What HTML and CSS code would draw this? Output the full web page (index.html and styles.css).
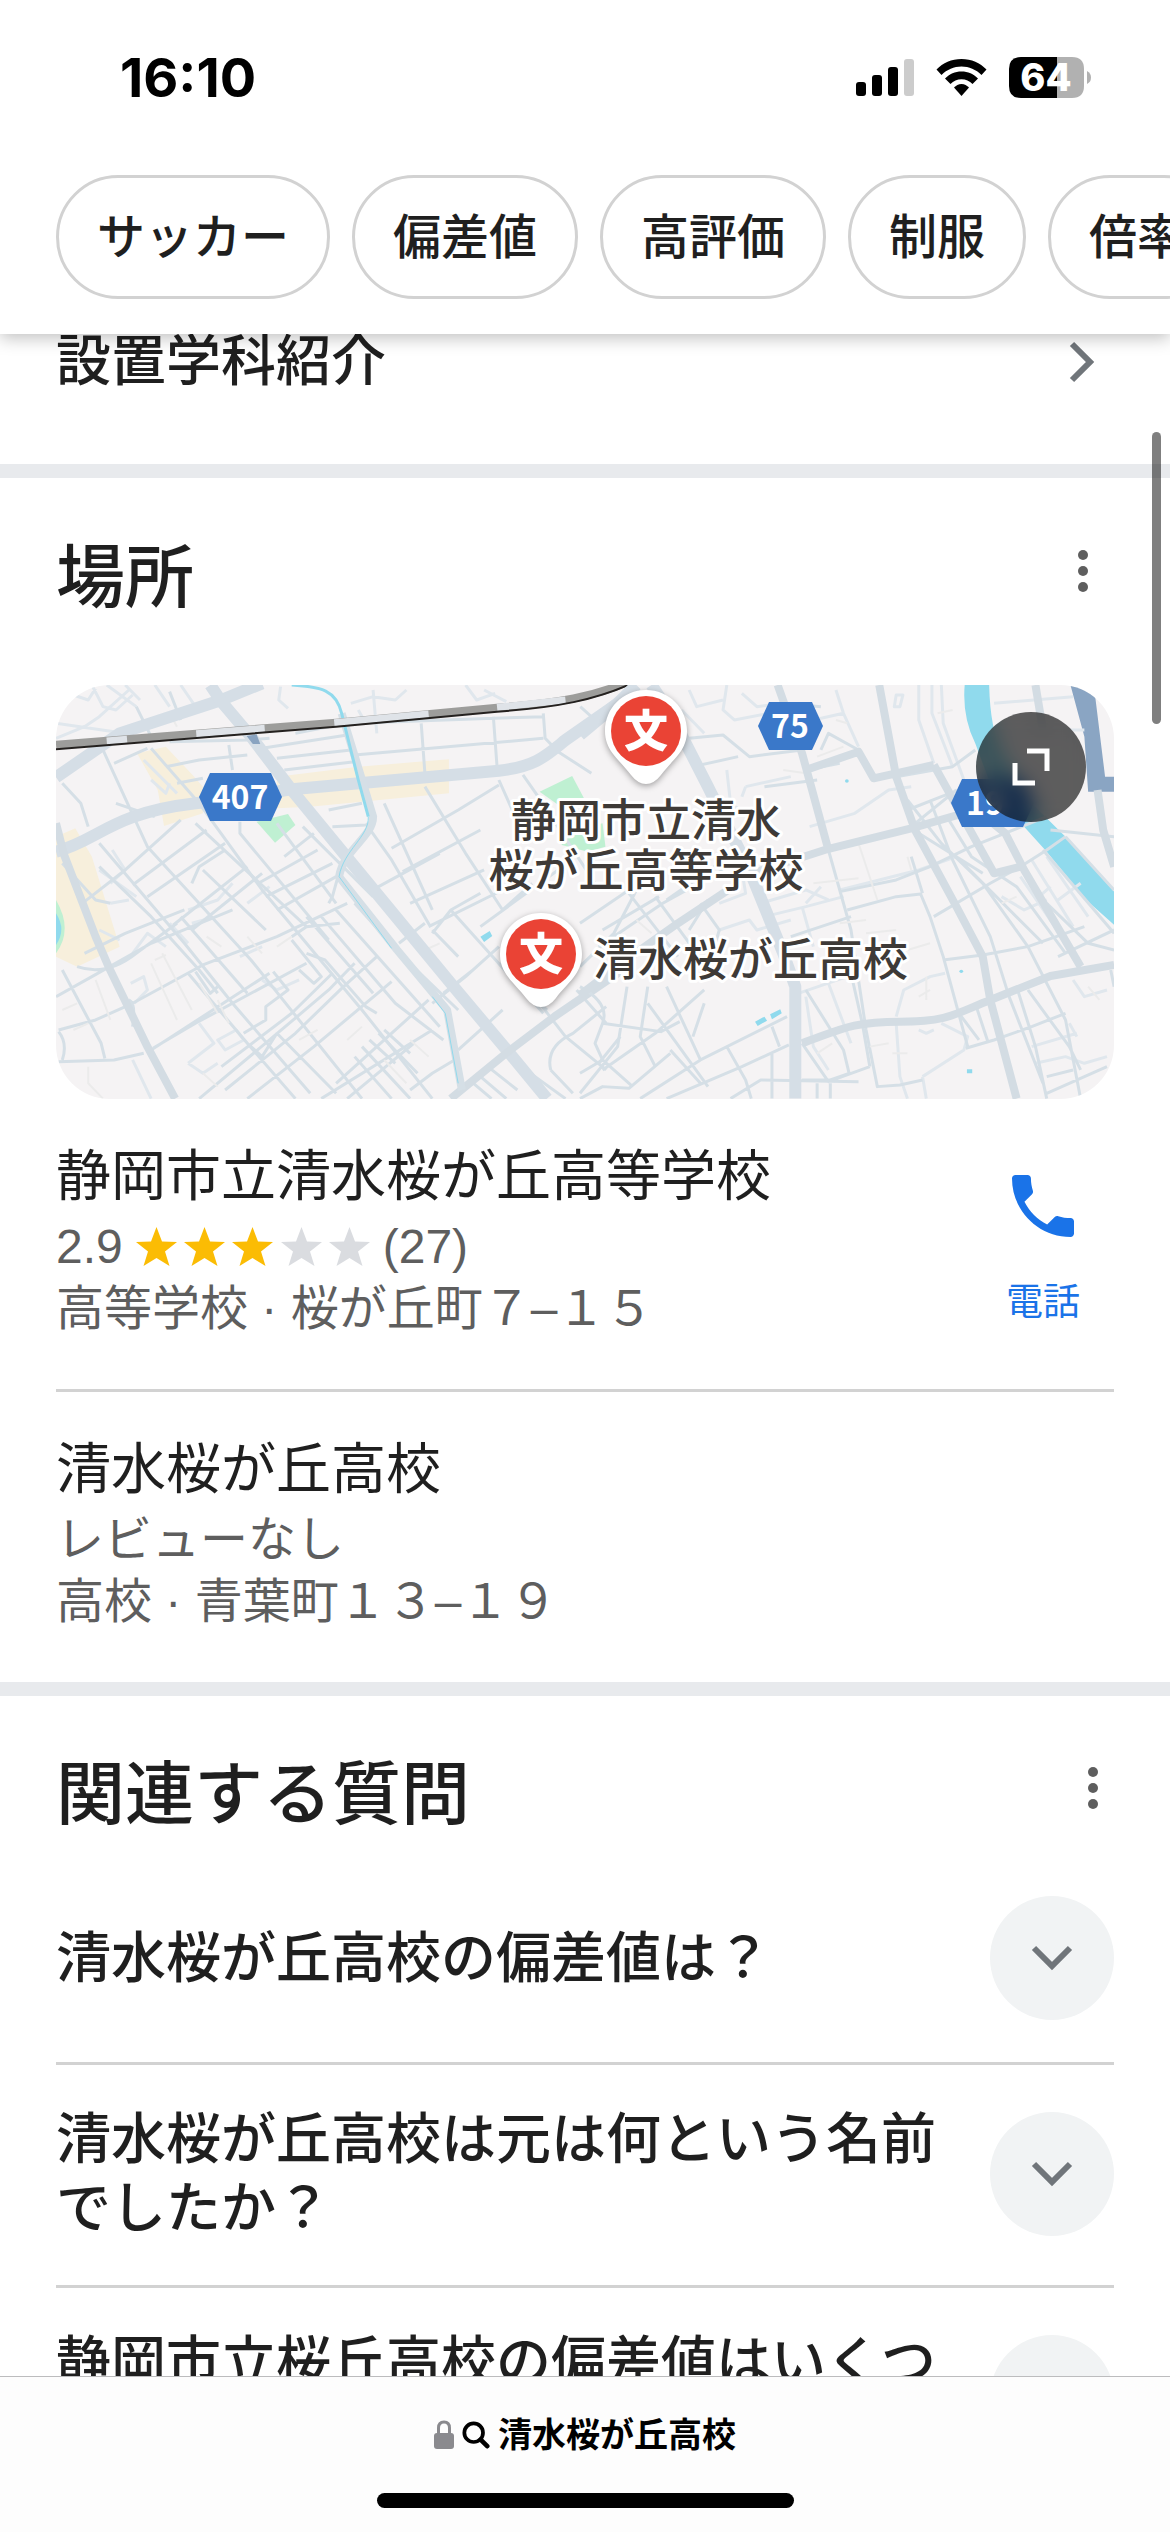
FILE: index.html
```html
<!DOCTYPE html>
<html lang="ja">
<head>
  <meta charset="utf-8">
  <meta name="viewport" content="width=device-width, initial-scale=1">
  <title>清水桜が丘高校</title>
  <link rel="stylesheet" href="styles.css">
</head>
<body>
  <header class="top">
    <div class="status">
      <span class="time">16:10</span>
      <div class="status-icons">
        <svg width="58" height="37" viewBox="0 0 58 37">
          <rect x="0" y="23" width="10" height="14" rx="3"/>
          <rect x="16" y="16" width="10" height="21" rx="3"/>
          <rect x="32" y="8" width="10" height="29" rx="3"/>
          <rect x="48" y="0" width="10" height="37" rx="3" fill="#ccc"/>
        </svg>
        <svg width="51" height="37" viewBox="0 0 51 37">
          <path d="M25.500 0C35.500 0 44 4 50.500 10.500L45.500 16C40 10.500 33 7.500 25.500 7.500S11 10.500 5.500 16L.5 10.500C7 4 15.500 0 25.500 0Z"/>
          <path d="M25.500 12.500C32 12.500 37.500 15 42 19.500L36.500 25C33.500 22 29.800 20.300 25.500 20.300S17.500 22 14.500 25L9 19.500C13.500 15 19 12.500 25.500 12.500Z"/>
          <path d="M25.500 25C28.500 25 31 26.500 33 28.600L25.500 37L18 28.600C20 26.500 22.500 25 25.500 25Z"/>
        </svg>
        <svg width="82" height="41" viewBox="0 0 82 41">
          <path d="M48 0H63Q75 0 75 12V29Q75 41 63 41H48Z" fill="#b1b1b1"/>
          <path d="M48 0H12Q0 0 0 12V29Q0 41 12 41H48Z"/>
          <path d="M78 14Q82 16 82 20.500T78 27Z" fill="#b1b1b1"/>
          <text class="battery-text" x="37" y="34" text-anchor="middle">64</text>
        </svg>
      </div>
    </div>
    <nav class="chips">
      <a class="chip" href="#">サッカー</a>
      <a class="chip" href="#">偏差値</a>
      <a class="chip" href="#">高評価</a>
      <a class="chip" href="#">制服</a>
      <a class="chip" href="#">倍率</a>
    </nav>
  </header>

  <main>
    <a class="more-row" href="#">
      <span>設置学科紹介</span>
      <svg width="28" height="42" viewBox="0 0 28 42"><path d="M4 3L22 21L4 39" fill="none" stroke="#70757a" stroke-width="6"/></svg>
    </a>

    <section class="block places">
      <div class="heading">
        <h2>場所</h2>
        <button class="dots" aria-label="その他">
          <svg width="12" height="44" viewBox="0 0 12 44"><circle cx="6" cy="6" r="5"/><circle cx="6" cy="22" r="5"/><circle cx="6" cy="38" r="5"/></svg>
        </button>
      </div>

      <div class="map">
        <svg class="map-art" viewBox="0 0 1058 414" preserveAspectRatio="xMidYMid slice">
          <!-- west half -->
          <g transform="matrix(.37 0 0 .3333 -15.900 -15)">
            <g class="shops">
              <path d="M262 250L340 230L412 315L440 350V430L335 468L318 360Z"/>
              <path d="M640 320L860 290L1105 268V370L730 410L640 415Z"/>
              <path d="M43 500L95 475L140 560L215 830L100 890L43 860Z"/>
            </g>
            <g class="park">
              <path d="M585 455L670 432L690 465L635 518Z"/>
              <path d="M1350 365L1438 318L1470 385L1420 420Z"/>
              <path d="M1405 490L1520 460L1528 530L1480 545L1410 525Z"/>
              <path d="M43 690Q90 780 43 850Z"/>
            </g>
            <path class="water" d="M43 730Q72 780 43 825Z"/>
            <path class="water" d="M1190 800L1215 783L1222 798L1200 816Z"/>
            <path class="lane" d="M60 90L90 75L130 90L150 55M140 45L170 110L205 120L250 75M180 45L260 110M43 160L200 185M43 205L120 170L160 140L240 60M230 45L270 90M310 45L350 110M380 45L420 110M650 50L645 90L670 115M840 100L900 80L960 90L990 60M860 120L880 160M900 60L910 190M1200 60L1260 95M1150 45L1180 90L1230 70"/>
            <path class="lane" d="M280 270L370 370M300 330L340 370L350 340M195 540L230 600L190 640M160 600L260 680M190 700L240 690M160 780L215 810M250 850L290 790L340 830M400 720L480 690L520 640M560 700L620 650M410 760L460 745M350 760L400 820M245 940L280 920L290 960L255 1000M400 1180L470 1120L430 1060M400 1180L440 1210L480 1180M480 1110L530 1080L550 1110L500 1140ZM250 1170L300 1286M540 860L600 830M600 930L640 960L700 930"/>
            <path class="road" d="M260 110L300 200M350 65L380 150M170 240L290 530L570 870L870 1286M60 340L110 400L130 470M200 280L290 235M205 400L310 440M300 235L430 400L600 660L870 1020L1060 1286M340 290L430 270L560 255M350 215L560 210L620 205M370 340L440 325M510 225L520 300M600 235L830 195M640 265L840 240M660 300L850 275M690 190L780 170M1030 160L1040 310M1225 140L1235 290M1360 130L1365 205L1400 245M1360 205L850 255M1400 245L1490 310M1460 110L1500 150M850 160L1225 145L1360 140"/>
            <path class="road" d="M160 520L390 820L520 1000L730 1270M420 460L720 770M60 580L150 690L190 700M120 695L230 600L380 450M160 590L300 740L430 900L480 970M250 645L450 480M290 680L500 520M360 765L560 590M410 640L430 590L500 540M410 780L600 610M440 600L610 780M540 455V490L780 810M660 560L740 490M590 640L750 540M610 680L790 580M640 720L800 620M710 470L900 680M640 460L800 700M790 470L880 465M780 420L870 400M880 460L950 570L1055 770M930 400L1060 720M950 535L1130 420L1240 345M980 605L1190 480M1040 350L1150 550L1250 720M1240 330L1300 480M1305 315L1340 370L1500 640M890 665L1080 550M1000 700L1200 600M1050 770L1250 660M1060 790L1110 720L1190 670M1250 720L1330 640M1110 720L1360 1030M1190 770L1400 600"/>
            <path class="road" d="M43 980L140 920L300 820L520 720M100 890Q180 920 260 850L370 760M120 850L230 790L390 720M60 900L165 1120L175 1165M50 1080L150 1050L250 1000L440 885L640 800L830 700M50 1175L200 1170L280 1150M50 1085Q75 1120 60 1170M240 990Q260 1000 250 1070M305 1135L420 1060L570 970L720 880M300 1140L620 910M380 740L560 970M420 905L460 970L480 950M400 910L560 1120L690 1286M430 1286L620 1110L780 960L850 880M500 1260L690 1090L820 950L910 860M560 1286L740 1130L950 935M760 1286L1060 1080M640 1090L800 1270M680 800L720 770L810 760M680 810L760 920L740 940L700 900M720 850L770 870L880 1010L910 1030M760 740L960 1000L1090 1110M800 720L1080 1070M850 700L980 860L1130 1020M720 740L900 970M630 905L670 960L610 1010V1050L550 1090M490 1190L680 1030L790 910M560 1120L600 1160L640 1090"/>
            <path class="road" d="M800 1240L940 1100L1050 990M830 1286L1010 1120M870 1130L1000 1286M890 1110L960 1180M915 1090L1020 1210M850 1160L950 1286M930 1080L1000 1150M780 700L790 680L805 620M970 820L1040 760M1060 1000L1150 920L1240 830M1130 1140L1250 1020M1090 970L1170 900M1130 860L1060 780M1000 1260L1060 1210L1120 1170M1160 1230L1220 1286M1180 1210L1260 1286M1210 1190L1290 1260M1250 1150L1420 1286M1380 1200Q1365 1130 1440 1090L1530 1010M1380 1200L1440 1270M1350 1000L1420 1100L1530 1200M1450 960L1530 1060M1510 1180L1568 1100M1240 880L1370 1020"/>
            <path class="ghost" d="M300 880L370 1050M330 850L410 1020M310 870L340 855M430 940L480 1030M480 990L510 1060M450 800L490 830M560 800L600 850M640 830L680 800M700 1110L750 1080M830 1110L870 1070M930 1170L990 1240M1000 1110L1050 1160M350 130L370 170M60 1020L100 1000M150 930L190 1050M90 1080L130 1060M1040 840L1080 820M130 1190V1240L170 1286M440 1210L480 1250"/>
            <path class="main-road" d="M43 322L215 190L490 90L600 40M43 545C160 510 190 430 420 400S640 362 680 358L1240 302C1340 290 1370 255 1420 210L1568 95"/>
            <path class="main-road" d="M460 45L490 95L570 200L680 360L850 590L1110 940L1265 1145L1370 1286"/>
            <path class="second" d="M43 460L65 555L150 800L185 890L290 1130L365 1286M1110 1286L1265 1145L1390 1040L1568 905"/>
            <path class="canal-bank" d="M815 130L870 330L900 440C900 500 820 540 808 620L965 840L1100 1020L1140 1260"/>
            <path class="canal" d="M680 45C760 50 800 60 815 130L860 330L887 440"/>
            <path class="canal thin" d="M887 440C890 500 820 540 808 620L950 835M1060 980L1095 1030L1130 1240"/>
            <path d="M558 198L585 193L595 222L575 222Z" fill="#89a3c0"/>
            <path class="rail" d="M43 224L800 158L1235 113C1400 100 1500 80 1600 30"/>
            <path class="rail-gap" d="M180 213L235 208M422 191L607 175M795 158L1050 132M1235 112L1420 90"/>
            <path class="rail-edge" d="M43 238L800 170L1235 125C1400 112 1500 90 1600 40"/>
          </g>
          <!-- east half -->
          <g transform="matrix(.3764 0 0 .3333 524 -15)">
            <path class="water" d="M1022 45H1087Q1090 180 1120 240L1200 400L1285 495L1419 665V765L1345 690L1240 545L1100 370L1050 220Q1015 140 1022 45Z"/>
            <path class="port" d="M1303 45H1365L1395 320H1419V365H1350L1340 200Z"/>
            <path class="water" d="M465 1055L490 1040L497 1052L472 1068ZM505 1033L532 1018L536 1030L510 1048ZM1028 1198H1042V1210H1028Z"/>
            <circle class="water" cx="709" cy="333" r="5"/><circle class="water" cx="1013" cy="904" r="5"/>
            <path class="lane" d="M290 60L310 110L380 90M390 45L380 120L410 150L500 130M270 120L330 190M430 70L470 110L540 100M680 60L700 130L740 230M620 150L700 130M840 75H858L850 110H835ZM900 45V150L940 280M935 45V130L990 290M960 45L965 160L1020 330M1100 100L1310 80M1110 180L1340 180M610 470L730 430L820 360L880 350M440 350L560 320M430 380L440 350M390 300L400 400L450 440M480 700L600 660L660 690M640 650L600 700M490 740L600 710L700 680M370 700L440 670L430 600M370 780L450 750L470 780L560 750M690 660L900 600L1000 560M580 970L710 920L740 910M660 940L720 1120M840 1040L860 960L930 920L970 910M840 1060L850 1220L870 1286M600 980L620 1130L660 1200M910 1220L1020 1140L1030 1100L960 1060M900 1080L920 1090L940 1080M910 1220L920 1286M1310 930L1340 980L1400 960M1300 1060L1320 1100M1200 1130L1320 1090M1210 1180L1290 1160L1340 1180L1400 1160M590 710L620 830M1170 620L1280 800M1200 570L1310 770M1240 560L1350 740M1270 690L1330 640M1210 690L1250 650M1120 680L1180 720L1240 690"/>
            <path class="road" d="M290 205L380 195L450 260L590 240M300 290L420 260M540 100L640 110M600 300L690 280M640 240L660 190L740 240M490 350L630 330M840 320L990 290L1050 240M870 420L960 380L1030 350M880 470L1000 360M870 390L960 520L1070 640L1190 830L1290 1050L1330 1286M900 490L1070 610M930 390L990 570L1090 800L1140 980L1230 1240M980 450L1040 560L1160 650L1290 850M660 540L720 780L760 1080L790 1250L850 1245L910 1230M710 720L840 680L905 672L930 740L965 860L1030 1130M880 560L910 670M690 665L840 630L930 590L1040 530L1240 440M940 740L1090 640L1170 590L1240 540L1290 500M1230 540L1419 790M1250 480L1419 500M1290 500L1419 660M965 870L1070 855L1190 830L1340 770M560 800L720 740M1000 560L1230 820M1000 1020L1060 1110M1050 1000L1085 1120M1025 1135L1100 1110L1200 1070L1290 1030M1240 1220L1310 1200M1240 1270L1400 1190M1160 950L1210 1130L1240 1286M1190 960L1300 1130L1330 1200M1410 900L1419 950M1240 700L1350 820L1419 840M1270 860L1419 780"/>
            <path class="road" d="M0 760L130 660M60 780L210 680M0 890L90 790L150 660M50 830L220 700L380 600M200 680L310 850M130 670L260 860M230 690L370 580M320 700L370 780L360 820M340 690L290 780M0 950Q80 1000 60 1060L40 1120L60 1170M125 950L100 1130L0 1270M180 950L160 1100L200 1190M230 950L320 1170M60 1060L215 1085L265 1055M60 1200L200 1090L330 960M180 1000L340 1250M0 1210L60 1170L140 1250M0 1286L60 1250L130 1255L240 1150M160 1286L320 1170L550 1040M230 1286L430 1190L555 1125M390 1130L440 1230L455 1286M400 1286L480 1230L740 1235M510 1070L530 1130M510 1150V1286M630 1240V1286M665 1240V1286M590 1120L660 1235L770 1190M600 960L700 1140L715 1210M700 880L740 930M720 910L750 1060L770 1190M240 1140L320 1240M330 1000L300 1100M590 1230H665L715 1210"/>
            <path class="ghost" d="M630 260L700 230M680 150L710 160M500 220L560 210M620 640L740 625M690 760L760 750M760 790L840 780M870 840L930 820M870 560L880 600M630 1150L670 1120M770 1130L820 1120M830 1150L870 1150M740 520L790 690M900 980L930 960M1120 700L1160 680M150 750L190 790M920 920V990M540 300L600 310M950 130L990 120M1350 950L1380 990"/>
            <path class="main-road" d="M0 195L100 100L150 45M190 45L240 130L340 350L450 600L540 850L572 950V1286"/>
            <path class="second" d="M525 45L590 250L660 540M600 300L740 245L780 325L940 285M940 285L1100 610L1170 590M795 45L840 320L890 480L1000 710L1070 860L1090 990L1160 1286M430 620L650 540L880 475L1050 420M0 975L110 880L260 760L400 655M590 1120C690 1080 720 1055 850 1055S1000 1030 1090 990L1250 918L1419 885M1000 370L1130 490L1180 600L1330 890M1210 45L1230 180"/>
            <path class="second" d="M1375 360L1390 480L1419 590"/>
          </g>
          <g class="shield">
            <path d="M154 88H215L226 112L215 136H154L143 112Z"/><text x="184" y="124" text-anchor="middle">407</text>
            <path d="M713 17H756L767 41L756 65H713L702 41Z"/><text x="734" y="53" text-anchor="middle">75</text>
            <path d="M906 94H967L978 118L967 142H906L895 118Z"/><text x="910" y="130">19</text>
          </g>
          <g class="pin">
            <path d="M590 5C567 5 549 23 549 46C549 66 563 74 575 90Q582 99 590 99T605 90C617 74 631 66 631 46C631 23 613 5 590 5Z"/>
            <circle cx="590" cy="46" r="35"/><text x="590" y="62" text-anchor="middle">文</text>
          </g>
          <g class="pin">
            <path d="M485 228C462 228 444 246 444 269C444 289 458 297 470 313Q477 322 485 322T500 313C512 297 526 289 526 269C526 246 508 228 485 228Z"/>
            <circle cx="485" cy="269" r="35"/><text x="485" y="285" text-anchor="middle">文</text>
          </g>
          <g class="place-name">
            <text x="590" y="152" text-anchor="middle">静岡市立清水</text>
            <text x="590" y="202" text-anchor="middle">桜が丘高等学校</text>
            <text x="537" y="291">清水桜が丘高校</text>
          </g>
        </svg>
        <button class="expand" aria-label="地図を拡大">
          <svg width="38" height="38" viewBox="0 0 38 38"><path d="M15 3H35V23M3 15V35H23" fill="none" stroke="#fff" stroke-width="5"/></svg>
        </button>
      </div>

      <article class="place">
        <div class="place-info">
          <h3>静岡市立清水桜が丘高等学校</h3>
          <p class="rating">2.9
            <svg class="stars" width="234" height="40" viewBox="0 0 234 40">
              <defs><path id="star" d="M20.500 0L26 14.500L41 15L29 24.500L33.500 39L20.500 31L7.500 39L12 24.500L0 15L15 14.500Z"/></defs>
              <use href="#star" fill="#fbbc04"/>
              <use href="#star" x="48" fill="#fbbc04"/>
              <use href="#star" x="96" fill="#fbbc04"/>
              <use href="#star" x="145" fill="#dadce0"/>
              <use href="#star" x="193" fill="#dadce0"/>
            </svg>
            (27)</p>
          <p>高等学校 · 桜が丘町７–１５</p>
        </div>
        <a class="call" href="#">
          <svg width="62" height="62" viewBox="3 3 18 18"><path fill="#1a73e8" d="M6.620 10.790c1.440 2.830 3.760 5.140 6.590 6.590l2.200-2.200c.27-.27.67-.36 1.020-.24 1.120.37 2.330.57 3.570.57.55 0 1 .45 1 1V20c0 .55-.45 1-1 1-9.390 0-17-7.610-17-17 0-.55.45-1 1-1h3.500c.55 0 1 .45 1 1 0 1.250.2 2.450.57 3.570.11.35.03.74-.25 1.020z"/></svg>
          <span>電話</span>
        </a>
      </article>
      <article class="place">
        <div class="place-info">
          <h3>清水桜が丘高校</h3>
          <p>レビューなし</p>
          <p>高校 · 青葉町１３–１９</p>
        </div>
      </article>
    </section>

    <section class="block related">
      <div class="heading">
        <h2>関連する質問</h2>
        <button class="dots" aria-label="その他">
          <svg width="12" height="44" viewBox="0 0 12 44"><circle cx="6" cy="6" r="5"/><circle cx="6" cy="22" r="5"/><circle cx="6" cy="38" r="5"/></svg>
        </button>
      </div>
      <button class="question">
        <span>清水桜が丘高校の偏差値は？</span>
        <i class="arrow"><svg width="44" height="28" viewBox="0 0 44 28"><path d="M4 4L22 22L40 4" fill="none" stroke="#70757a" stroke-width="6"/></svg></i>
      </button>
      <button class="question">
        <span>清水桜が丘高校は元は何という名前でしたか？</span>
        <i class="arrow"><svg width="44" height="28" viewBox="0 0 44 28"><path d="M4 4L22 22L40 4" fill="none" stroke="#70757a" stroke-width="6"/></svg></i>
      </button>
      <button class="question">
        <span>静岡市立桜丘高校の偏差値はいくつですか？</span>
        <i class="arrow"><svg width="44" height="28" viewBox="0 0 44 28"><path d="M4 4L22 22L40 4" fill="none" stroke="#70757a" stroke-width="6"/></svg></i>
      </button>
    </section>
  </main>

  <div class="scrollbar"></div>

  <footer class="bottom">
    <a class="address" href="#">
      <svg width="20" height="30" viewBox="0 0 20 30"><path d="M4.500 14V8Q4.500 2 10 2T15.500 8V14" fill="none" stroke="#8a8a8e" stroke-width="3"/><rect y="13" width="20" height="16" rx="3" fill="#8a8a8e"/></svg>
      <svg width="28" height="28" viewBox="0 0 30 30"><circle cx="12.500" cy="12.500" r="10" fill="none" stroke="#000" stroke-width="4"/><path d="M20 20L27 27" stroke="#000" stroke-width="5" stroke-linecap="round"/></svg>
      <span>清水桜が丘高校</span>
    </a>
    <div class="home-bar"></div>
  </footer>
</body>
</html>
```
FILE: styles.css
```css
* {
  box-sizing: border-box;
}

body {
  margin: 0;
  background-color: #fff;
  color: #1f1f1f;
  font-family: "Liberation Sans", "Noto Sans CJK JP", sans-serif;
  font-size: 48px;
  line-height: 60px;
  overflow-x: hidden;
}

a {
  color: inherit;
  text-decoration: none;
}

button {
  background: none;
  border: none;
  padding: 0;
  color: inherit;
  font: inherit;
  cursor: pointer;
}

svg {
  display: block;
  flex: none;
}

h2, h3, p {
  margin: 0;
  font-weight: 400;
}

/* status bar and chips */
.top {
  position: sticky;
  top: 0;
  z-index: 2;
  background-color: #fff;
  padding-bottom: 35px;
  box-shadow: 0 4px 16px rgba(0, 0, 0, 0.25);
}

.status {
  display: flex;
  justify-content: space-between;
  align-items: center;
  height: 175px;
  padding: 0 79px 20px 120px;
  color: #000;
}

.time {
  font-family: Inter, sans-serif;
  font-size: 54px;
  font-weight: 700;
}

.status-icons {
  display: flex;
  align-items: center;
  gap: 22px;
}

.battery-text {
  fill: #fff;
  font-family: Inter, sans-serif;
  font-size: 38px;
  font-weight: 800;
}

.chips {
  display: flex;
  gap: 22px;
  padding-left: 56px;
  overflow: hidden;
}

.chip {
  flex: none;
  border: 3px solid #d2d2d2;
  border-radius: 62px;
  padding: 31px 38px 29px;
  line-height: 58px;
  font-weight: 500;
}

/* content */
.more-row {
  display: flex;
  justify-content: space-between;
  align-items: center;
  padding: 0 74px 75px 56px;
  font-size: 55px;
  line-height: 55px;
  font-weight: 500;
}

.block {
  position: relative;
  border-top: 14px solid #e8eaed;
  padding: 0 56px;
}

.heading {
  display: flex;
  justify-content: space-between;
  align-items: center;
}

.places .heading {
  padding: 56px 25px 61px 0;
}

.related .heading {
  padding: 55px 15px 55px 0;
}

h2 {
  font-size: 69px;
  line-height: 90px;
  font-weight: 500;
}

.dots {
  fill: #5e5e5e;
  padding-bottom: 16px;
}

/* map */
.map {
  position: relative;
  height: 414px;
  border-radius: 54px;
  overflow: hidden;
  background-color: #f5f3f4;
}

.map-art {
  width: 100%;
  height: 100%;
}

.map-art path {
  vector-effect: non-scaling-stroke;
}

.lane, .road, .ghost, .second, .main-road, .canal, .canal-bank, .rail, .rail-gap, .rail-edge {
  fill: none;
  stroke: #d5dfe6;
  stroke-linejoin: round;
}

.lane {
  stroke-width: 3px;
  stroke: #e0e7ed;
}

.road {
  stroke-width: 3px;
}

.ghost {
  stroke: #ebebeb;
  stroke-width: 2px;
}

.second {
  stroke: #d3dce3;
  stroke-width: 8px;
}

.main-road {
  stroke: #d5dee6;
  stroke-width: 12px;
}

.canal-bank {
  stroke-width: 8px;
}

.canal {
  stroke: #90daed;
  stroke-width: 3px;
}

.thin {
  stroke-width: 1px;
}

.rail {
  stroke: #9d9d9b;
  stroke-width: 8px;
}

.rail-gap {
  stroke: #dfe3e8;
  stroke-width: 7px;
}

.rail-edge {
  stroke: #24211f;
  stroke-width: 2px;
}

.shops { fill: #f7efdc; }
.park { fill: #bff0d2; }
.water { fill: #90daed; }
.port { fill: #8aa5c3; }

.shield path {
  fill: #3a78c9;
}

.shield text {
  fill: #fff;
  font-family: "Noto Sans CJK JP", sans-serif;
  font-size: 32px;
  font-weight: 700;
}

.pin {
  filter: drop-shadow(0 2px 3px rgba(0, 0, 0, 0.35));
}

.pin path { fill: #fff; }
.pin circle { fill: #ea4335; }

.pin text {
  fill: #fff;
  font-family: "Noto Sans CJK JP", sans-serif;
  font-size: 44px;
  font-weight: 900;
}

.place-name {
  fill: #3e3a37;
  stroke: #fff;
  stroke-width: 6px;
  stroke-linejoin: round;
  paint-order: stroke;
  font-family: "Noto Sans CJK JP", sans-serif;
  font-size: 45px;
  font-weight: 500;
}

.expand {
  position: absolute;
  top: 27px;
  right: 28px;
  display: flex;
  justify-content: center;
  align-items: center;
  width: 110px;
  height: 110px;
  border-radius: 50%;
  background-color: rgba(0, 0, 0, 0.62);
  backdrop-filter: blur(10px);
}

/* places */
.place {
  display: flex;
  justify-content: space-between;
  padding: 41px 0 49px;
  color: #5e5e5e;
}

.place + .place {
  border-top: 3px solid #d2d2d2;
}

.place h3 {
  margin-bottom: 4px;
  color: #1f1f1f;
  font-size: 55px;
  line-height: 72px;
}

.place p {
  line-height: 62px;
}

.place .rating {
  display: flex;
  align-items: center;
  gap: 13px;
}

.call {
  display: flex;
  flex-direction: column;
  align-items: center;
  gap: 36px;
  padding: 35px 34px 0 0;
  color: #1a73e8;
  font-size: 37px;
}

/* questions */
.question {
  display: flex;
  justify-content: space-between;
  align-items: center;
  width: 100%;
  padding: 0 0 42px;
  gap: 40px;
  font-size: 55px;
  line-height: 69px;
  font-weight: 500;
  text-align: left;
}

.question + .question {
  border-top: 3px solid #d2d2d2;
  padding: 40px 0 42px;
}

.arrow {
  display: flex;
  flex: none;
  justify-content: center;
  align-items: center;
  width: 124px;
  height: 124px;
  border-radius: 50%;
  background-color: #f1f3f4;
}

/* browser chrome */
.scrollbar {
  position: fixed;
  z-index: 3;
  top: 432px;
  right: 9px;
  width: 9px;
  height: 292px;
  border-radius: 5px;
  background-color: rgba(0, 0, 0, 0.5);
}

.bottom {
  position: fixed;
  z-index: 2;
  bottom: 0;
  width: 100%;
  display: flex;
  flex-direction: column;
  align-items: center;
  gap: 28px;
  padding: 28px 0 24px;
  border-top: 1px solid #bcbcbe;
  background-color: #fdfdfd;
}

.address {
  display: flex;
  align-items: center;
  gap: 8px;
  color: #000;
  font-size: 34px;
  font-weight: 700;
}

.home-bar {
  width: 417px;
  height: 15px;
  border-radius: 8px;
  background-color: #000;
}
```
